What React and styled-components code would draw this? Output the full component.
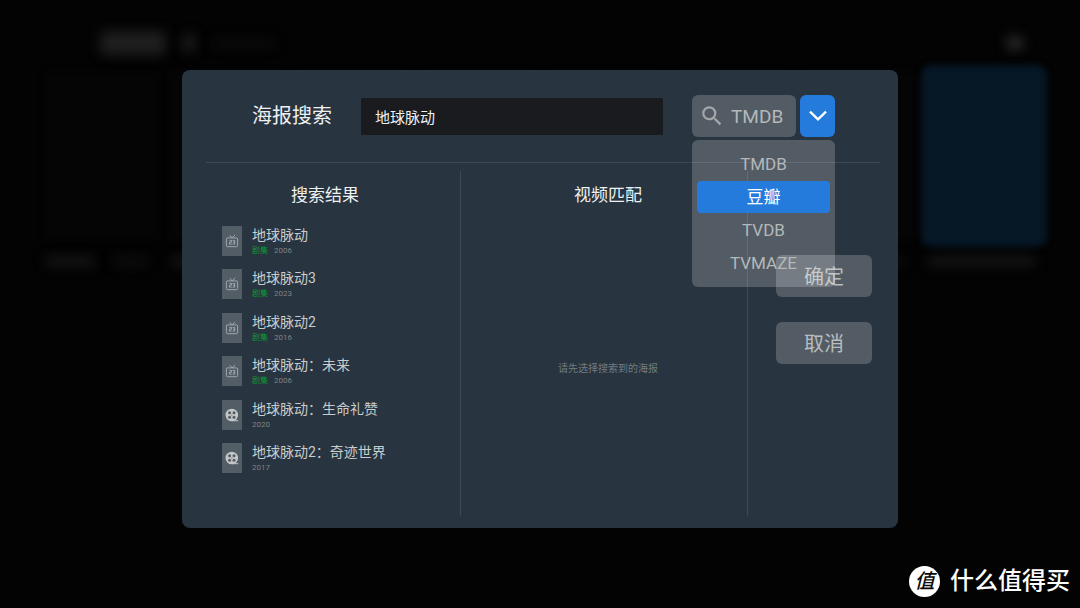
import React, { useState } from "react";
import styled, { createGlobalStyle } from "styled-components";
import { MdSearch } from "react-icons/md";

const SOURCES = ["TMDB", "豆瓣", "TVDB", "TVMAZE"];

const RESULTS = [
  { title: "地球脉动", series: true, year: 2006 },
  { title: "地球脉动3", series: true, year: 2023 },
  { title: "地球脉动2", series: true, year: 2016 },
  { title: "地球脉动：未来", series: true, year: 2006 },
  { title: "地球脉动：生命礼赞", series: false, year: 2020 },
  { title: "地球脉动2：奇迹世界", series: false, year: 2017 },
];

const TvIcon = () => (
  <svg width="14" height="14" viewBox="0 0 14 14" fill="none" stroke="#a9afb2" aria-hidden="true">
    <rect x="1.4" y="3.9" width="11.2" height="8.8" rx="1.2" strokeWidth="0.9" />
    <path d="M4.8 1.2 7 3.9 10.2 0.8" strokeWidth="0.9" />
    <path d="M4.5 6.4h2v1.8h-2v1.9h2.2M7.6 6.4h2.1v3.7H7.6M8 8.2h1.6" strokeWidth="0.9" />
  </svg>
);

const ReelIcon = () => (
  <svg width="14" height="14" viewBox="0 0 14 14" aria-hidden="true">
    <circle cx="6.8" cy="7" r="6.3" fill="#c3c7c8" />
    <path d="M7 12.2h6.2v1H7z" fill="#c3c7c8" />
    <g fill="#535d66">
      <circle cx="4.6" cy="4.7" r="1.5" />
      <circle cx="9" cy="4.7" r="1.5" />
      <circle cx="4.6" cy="9.2" r="1.5" />
      <circle cx="9" cy="9.2" r="1.5" />
      <circle cx="6.8" cy="7" r="0.6" />
    </g>
  </svg>
);

const Chevron = () => (
  <svg width="18" height="12" viewBox="0 0 18 12" fill="none" aria-hidden="true">
    <path d="M1 1.6 9 9.4 17 1.6" stroke="#fff" strokeWidth="2.3" />
  </svg>
);

const Library = () => (
  <Backdrop aria-hidden="true">
    <BackdropHeader>
      <Smudge $w={66} $h={24} $color="#1e1e1e" />
      <Smudge $w={14} $h={18} $color="#1a1a1a" />
      <Smudge $w={62} $h={8} $color="#0c0c0c" />
      <Smudge $w={18} $h={14} $color="#282828" $end />
    </BackdropHeader>
    <Shelf>
      {[0, 1, 2, 3, 4, 5, 6, 7].map((n) => (
        <div key={n}>
          <Poster $focused={n === 7} />
          <Caption>
            <Smudge $w={n === 7 ? 108 : 50} $h={9} $color="#171717" />
            {n !== 7 && <Smudge $w={34} $h={7} $color="#111111" />}
          </Caption>
        </div>
      ))}
    </Shelf>
  </Backdrop>
);

const App = () => {
  const [open, setOpen] = useState(true);
  const [source, setSource] = useState("TMDB");
  const [active, setActive] = useState("豆瓣");
  const [query, setQuery] = useState("地球脉动");

  const choose = (name) => {
    setSource(name);
    setActive(name);
    setOpen(false);
  };

  return (
    <Page lang="zh-CN">
      <GlobalStyle />
      <Library />
      <Dialog role="dialog" aria-labelledby="poster-title">
        <Header>
          <Title id="poster-title" htmlFor="poster-query">
            海报搜索
          </Title>
          <QueryInput
            id="poster-query"
            value={query}
            onChange={(e) => setQuery(e.target.value)}
          />
          <SourcePicker>
            <SearchButton type="button">
              <MdSearch size={26} />
              {source}
            </SearchButton>
            <ToggleButton
              type="button"
              aria-label="选择数据源"
              aria-haspopup="listbox"
              aria-expanded={open}
              onClick={() => setOpen(!open)}
            >
              <Chevron />
            </ToggleButton>
            {open && (
              <Menu role="listbox" aria-label="数据源">
                {SOURCES.map((name) => (
                  <MenuItem
                    key={name}
                    type="button"
                    role="option"
                    aria-selected={name === active}
                    $active={name === active}
                    onMouseEnter={() => setActive(name)}
                    onClick={() => choose(name)}
                  >
                    {name}
                  </MenuItem>
                ))}
              </Menu>
            )}
          </SourcePicker>
        </Header>

        <Body>
          <ResultColumn>
            <ColumnTitle>搜索结果</ColumnTitle>
            <ResultList>
              {RESULTS.map(({ title, series, year }) => (
                <Result key={title}>
                  <Thumb>{series ? <TvIcon /> : <ReelIcon />}</Thumb>
                  <div>
                    <ResultTitle>{title}</ResultTitle>
                    <Meta>
                      {series && <Tag>剧集</Tag>}
                      <span>{year}</span>
                    </Meta>
                  </div>
                </Result>
              ))}
            </ResultList>
          </ResultColumn>
          <MatchColumn>
            <ColumnTitle>视频匹配</ColumnTitle>
            <Hint>请先选择搜索到的海报</Hint>
          </MatchColumn>
          <Actions>
            <ActionButton type="button">确定</ActionButton>
            <ActionButton type="button">取消</ActionButton>
          </Actions>
        </Body>
      </Dialog>
      <Watermark>
        <Badge>值</Badge>
        什么值得买
      </Watermark>
    </Page>
  );
};

const GlobalStyle = createGlobalStyle`
  * {
    box-sizing: border-box;
  }

  body {
    margin: 0;
    background: #030303;
  }

  body, button, input {
    font-family: Roboto, "Noto Sans CJK SC", sans-serif;
  }

  button {
    border: 0;
    padding: 0;
    cursor: pointer;
  }
`;

const Page = styled.main`
  position: relative;
  display: flex;
  align-items: center;
  justify-content: center;
  min-height: 100vh;
  padding: 0 182px 10px;
  overflow: hidden;
`;

const Backdrop = styled.div`
  position: absolute;
  inset: 0;
  padding: 28px 40px 0 45px;
`;

const BackdropHeader = styled.div`
  display: flex;
  align-items: center;
  gap: 16px;
  height: 30px;
  padding: 0 16px 0 55px;
`;

const Smudge = styled.div`
  width: ${({ $w }) => $w}px;
  height: ${({ $h }) => $h}px;
  margin-left: ${({ $end }) => ($end ? "auto" : "0")};
  border-radius: 6px;
  background: ${({ $color }) => $color};
  filter: blur(6px);
`;

const Shelf = styled.div`
  display: flex;
  justify-content: space-between;
  padding-top: 14px;
`;

const Poster = styled.div`
  width: 112px;
  height: 168px;
  border-radius: 4px;
  background: ${({ $focused }) => ($focused ? "#061725" : "#050505")};
  box-shadow: ${({ $focused }) => ($focused ? "0 0 0 7px #061725" : "none")};
  filter: blur(3px);
`;

const Caption = styled.div`
  display: flex;
  align-items: center;
  gap: 18px;
  width: 112px;
  height: 14px;
  margin-top: 14px;
`;

const Dialog = styled.section`
  position: relative;
  width: 100%;
  max-width: 960px;
  padding: 0 18px 12px 24px;
  border-radius: 8px;
  background: #28343f;
`;

const Header = styled.header`
  display: flex;
  align-items: center;
  gap: 29px;
  padding: 25px 45px 25px 46px;
  border-bottom: 1px solid #3e4953;
`;

const Title = styled.label`
  color: #eef0f1;
  font-size: 20px;
  line-height: 28px;
  white-space: nowrap;
`;

const QueryInput = styled.input`
  flex: 1;
  min-width: 0;
  height: 37px;
  padding: 0 14px;
  border: 0;
  border-radius: 1px;
  outline: none;
  background: #191b1e;
  color: #eef0f1;
  font-size: 15px;
`;

const SourcePicker = styled.div`
  position: relative;
  display: flex;
  gap: 4px;
`;

const SearchButton = styled.button`
  display: flex;
  align-items: center;
  gap: 6px;
  width: 104px;
  height: 42px;
  padding-left: 7px;
  border-radius: 6px;
  background: rgba(255, 255, 255, 0.2);
  color: #b4b8b9;
  font-size: 19px;

  svg {
    flex: none;
    color: #a5a8a9;
  }
`;

const ToggleButton = styled.button`
  display: flex;
  align-items: center;
  justify-content: center;
  width: 35px;
  height: 42px;
  border-radius: 6px;
  background: #247bdc;
`;

const Menu = styled.div`
  position: absolute;
  z-index: 1;
  top: 100%;
  left: 0;
  right: 0;
  display: flex;
  flex-direction: column;
  gap: 1px;
  margin-top: 3px;
  padding: 8px 5px;
  border-radius: 6px;
  background: rgba(255, 255, 255, 0.2);
`;

const MenuItem = styled.button`
  height: 32px;
  border-radius: 4px;
  background: ${({ $active }) => ($active ? "#247bdc" : "transparent")};
  color: ${({ $active }) => ($active ? "#fff" : "#b4b8b9")};
  font-size: 17px;
  line-height: 32px;
`;

const Body = styled.div`
  display: grid;
  grid-template-columns: 255fr 287fr 132fr;
  min-height: 345px;
  margin-top: 8px;
`;

const ResultColumn = styled.div`
  padding: 12px 32px 0 16px;
  border-right: 1px solid #3e4953;
`;

const MatchColumn = styled.div`
  display: flex;
  flex-direction: column;
  padding: 12px 0 0 8px;
  border-right: 1px solid #3e4953;
`;

const ColumnTitle = styled.h2`
  margin: 0;
  color: #eef0f1;
  font-size: 17px;
  font-weight: 400;
  line-height: 24px;
  text-align: center;
`;

const ResultList = styled.ul`
  display: flex;
  flex-direction: column;
  justify-content: space-between;
  min-height: 247px;
  margin: 19px 0 0;
  padding: 0;
  list-style: none;
`;

const Result = styled.li`
  display: flex;
  gap: 10px;
  height: 30px;
`;

const Thumb = styled.div`
  display: flex;
  flex: none;
  align-items: center;
  justify-content: center;
  width: 20px;
  height: 30px;
  background: #535d66;
`;

const ResultTitle = styled.div`
  color: #c8cccd;
  font-size: 14px;
  line-height: 19px;
  white-space: nowrap;
`;

const Meta = styled.div`
  display: flex;
  gap: 6px;
  color: #7c8388;
  font-size: 8px;
  line-height: 12px;
`;

const Tag = styled.span`
  color: #0f9a35;
`;

const Hint = styled.p`
  margin: 152px 0 0;
  color: #757b7f;
  font-size: 10px;
  line-height: 20px;
  text-align: center;
`;

const Actions = styled.div`
  display: flex;
  flex-direction: column;
  gap: 25px;
  padding: 84px 8px 0 28px;
`;

const ActionButton = styled.button`
  height: 42px;
  padding-bottom: 2px;
  border-radius: 6px;
  background: rgba(255, 255, 255, 0.2);
  color: #b9bdbe;
  font-size: 20px;
`;

const Watermark = styled.div`
  position: absolute;
  right: 10px;
  bottom: 11px;
  display: flex;
  align-items: center;
  gap: 10px;
  color: #fff;
  font-size: 24px;
  font-weight: 500;
  line-height: 32px;
`;

const Badge = styled.span`
  width: 31px;
  height: 31px;
  border-radius: 50%;
  background: #fff;
  color: #0a0a0a;
  font-size: 20px;
  font-style: italic;
  line-height: 30px;
  text-align: center;
`;

export default App;
